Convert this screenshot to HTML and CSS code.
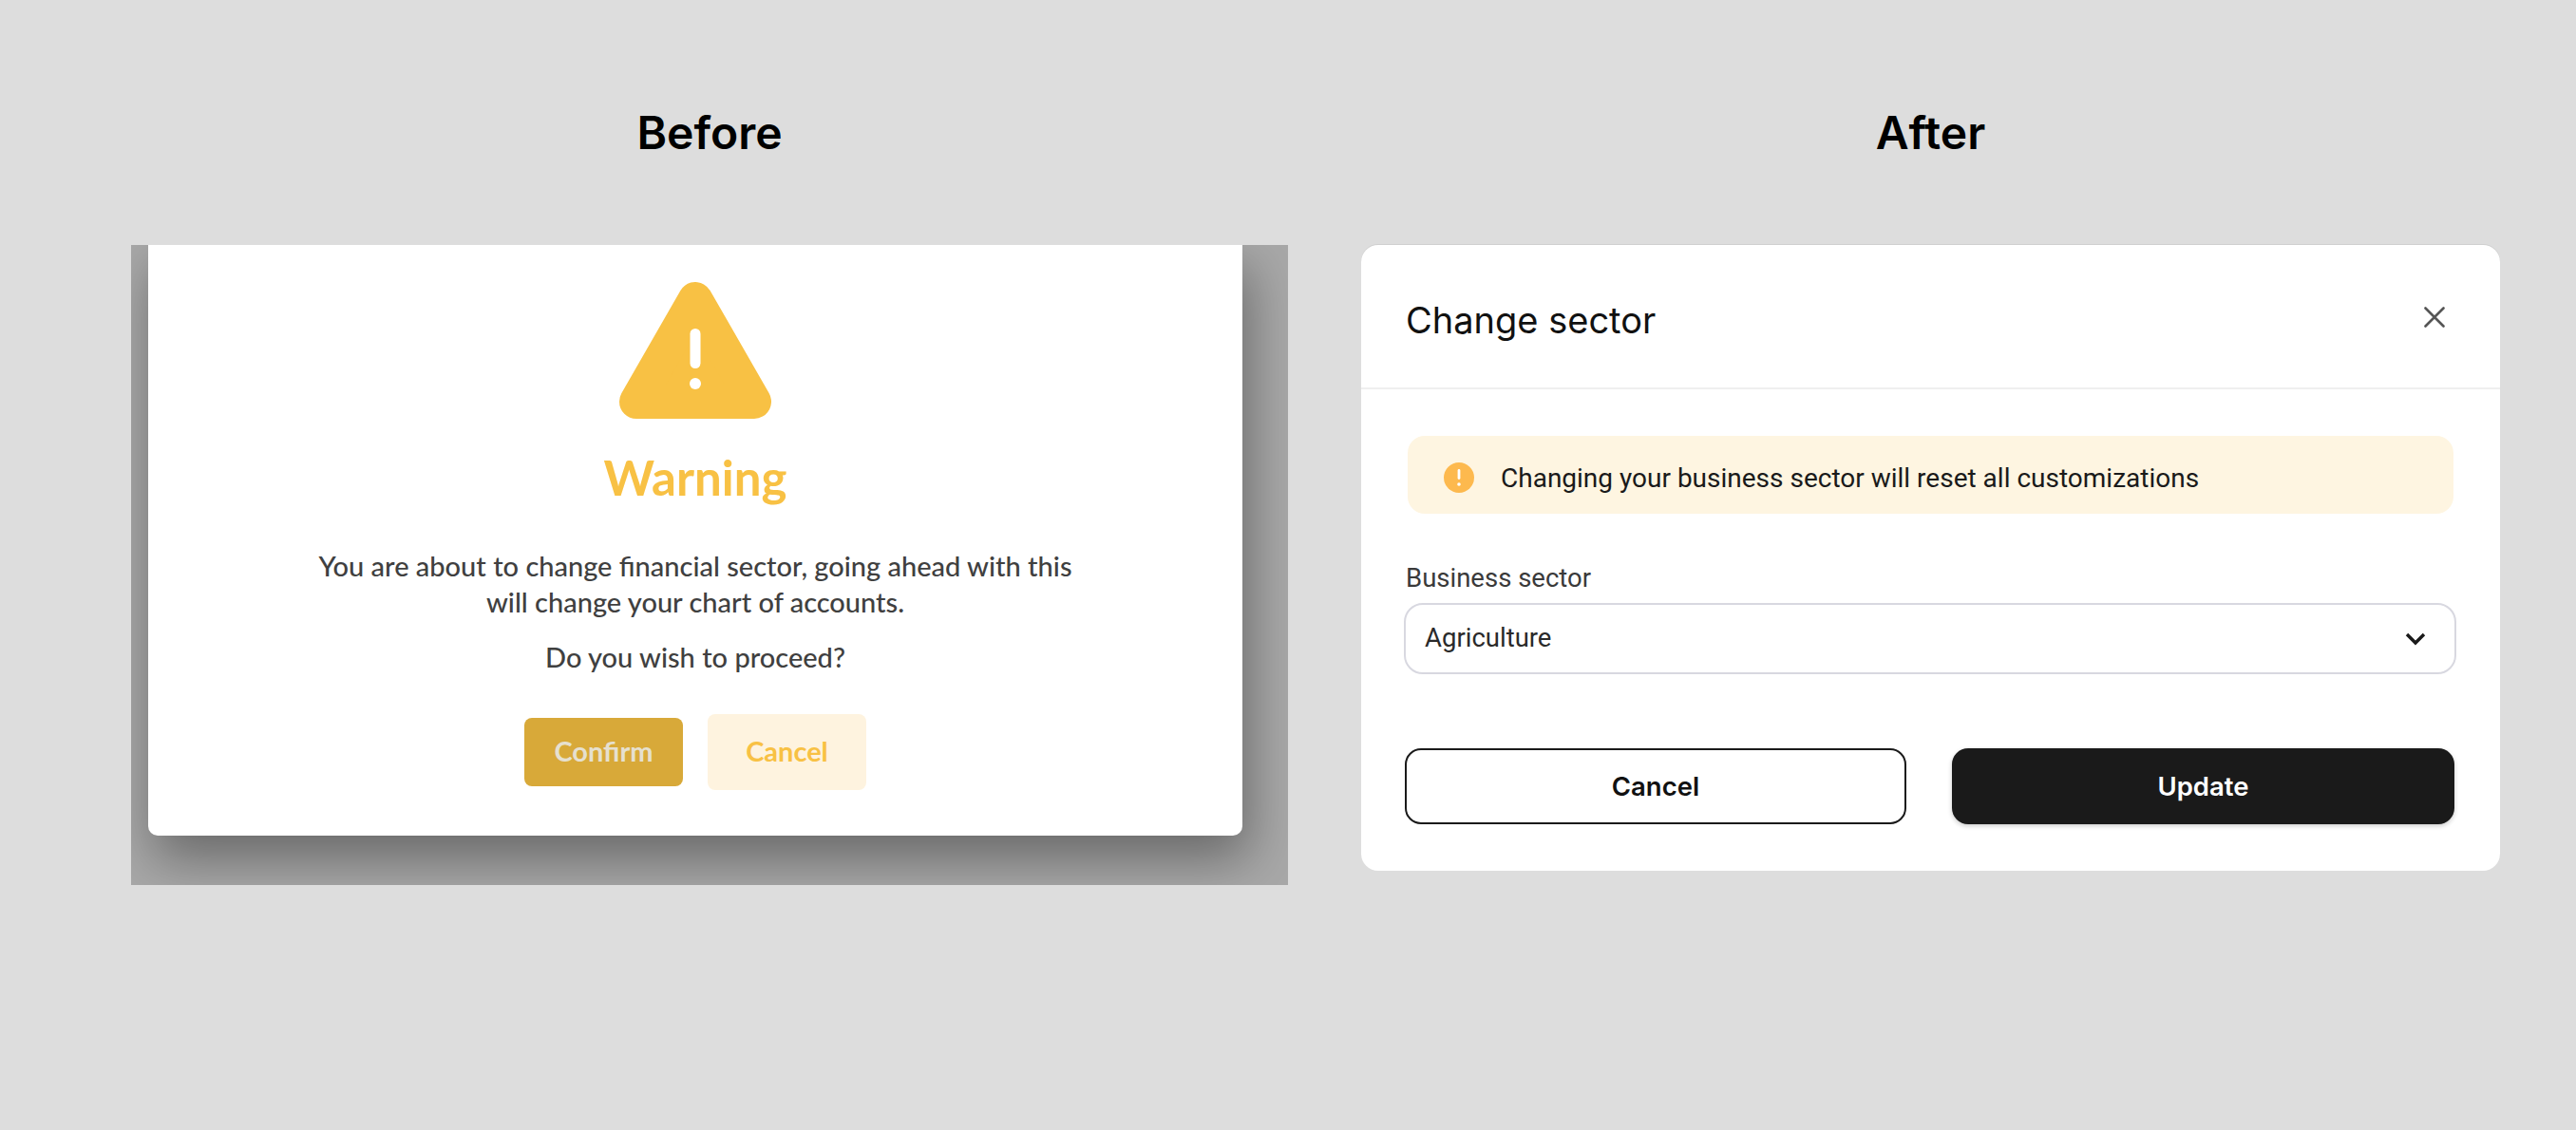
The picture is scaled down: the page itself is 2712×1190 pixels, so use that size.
FILE: index.html
```html
<!DOCTYPE html>
<html lang="en">
<head>
  <meta charset="UTF-8">
  <title>Before and after</title>
  <link rel="stylesheet" href="styles.css">
</head>
<body>
  <div class="page">
    <h1 class="side-title">Before</h1>
    <h1 class="side-title">After</h1>

    <div class="backdrop">
      <div class="warn-modal">
        <svg class="warn-icon" viewBox="0 0 160 144" width="160" height="144">
          <path d="M80 18 L142 126 L18 126 Z" fill="#f8c144" stroke="#f8c144" stroke-width="36" stroke-linejoin="round"/>
          <rect x="74.5" y="49" width="11" height="42" rx="5.5" fill="#fff"/>
          <circle cx="80" cy="107" r="6" fill="#fff"/>
        </svg>
        <h2 class="warn-title">Warning</h2>
        <p class="warn-text">You are about to change financial sector, going ahead with this<br>will change your chart of accounts.</p>
        <p class="warn-ask">Do you wish to proceed?</p>
        <div class="warn-actions">
          <button class="warn-confirm">Confirm</button>
          <button class="warn-cancel">Cancel</button>
        </div>
      </div>
    </div>

    <div class="card">
      <div class="card-head">
        <h2 class="card-title">Change sector</h2>
        <svg class="close-icon" viewBox="0 0 22 22" width="22" height="22">
          <path d="M1.5 1.5 L20.5 20.5 M20.5 1.5 L1.5 20.5" stroke="#555" stroke-width="2.6" stroke-linecap="round" fill="none"/>
        </svg>
      </div>
      <div class="card-body">
        <div class="alert">
          <svg class="alert-icon" viewBox="0 0 32 32" width="32" height="32">
            <circle cx="16" cy="16" r="16" fill="#fdb94e"/>
            <rect x="14.6" y="7" width="2.8" height="11" rx="1.4" fill="#fff"/>
            <circle cx="16" cy="23" r="1.8" fill="#fff"/>
          </svg>
          <span>Changing your business sector will reset all customizations</span>
        </div>
        <label class="field-label">Business sector</label>
        <div class="select">
          <span>Agriculture</span>
          <svg class="chevron" viewBox="0 0 22 14" width="22" height="14">
            <path d="M2 2 L11 11 L20 2" stroke="#1a1a1a" stroke-width="3.4" fill="none"/>
          </svg>
        </div>
        <div class="card-actions">
          <button class="btn-outline">Cancel</button>
          <button class="btn-dark">Update</button>
        </div>
      </div>
    </div>
  </div>
</body>
</html>
```

FILE: styles.css
```css
html, body {
  margin: 0;
  padding: 0;
  height: 100%;
}
body {
  background-color: #dddddd;
  font-family: "Inter", sans-serif;
  overflow: hidden;
}
.page {
  display: grid;
  grid-template-columns: 1218px 1199px;
  grid-template-rows: 258px auto;
  column-gap: 77px;
  padding-left: 138px;
  align-items: start;
}
.side-title {
  margin: 112px 0 0;
  font-size: 48px;
  line-height: 56px;
  font-weight: 600;
  color: #000;
  text-align: center;
}

/* before */
.backdrop {
  background-color: #a8a8a8;
  height: 674px;
  padding: 0 48px 0 18px;
  box-sizing: border-box;
  overflow: hidden;
}
.warn-modal {
  height: 622px;
  box-sizing: border-box;
  padding-top: 39px;
  background-color: #fff;
  border-radius: 0 0 10px 10px;
  box-shadow: 6px 24px 54px rgba(0, 0, 0, 0.38);
  display: flex;
  flex-direction: column;
  align-items: center;
  font-family: "Lato", sans-serif;
}
.warn-icon {
  display: block;
}
.warn-title {
  margin: 34px 0 0;
  font-size: 51px;
  line-height: 56px;
  font-weight: 700;
  color: #f8c144;
}
.warn-text {
  margin: 46px 0 0;
  font-size: 29px;
  line-height: 38px;
  font-weight: 500;
  color: #404040;
  text-align: center;
}
.warn-ask {
  margin: 20px 0 0;
  font-size: 29px;
  line-height: 38px;
  font-weight: 500;
  color: #404040;
}
.warn-actions {
  margin-top: 41px;
  display: flex;
  align-items: center;
  gap: 26px;
}
.warn-actions button {
  width: 167px;
  border: none;
  border-radius: 8px;
  padding: 0 0 3px;
  font-family: "Lato", sans-serif;
  font-size: 29px;
  font-weight: 700;
}
.warn-confirm {
  height: 72px;
  background-color: #d8a939;
  color: #e6e0cf;
}
.warn-cancel {
  height: 80px;
  background-color: #fef3df;
  color: #f8c144;
}

/* after */
.card {
  height: 659px;
  background-color: #fff;
  border-radius: 18px;
  box-shadow: 0 -1px 0 rgba(0, 0, 0, 0.06);
}
.card-head {
  height: 148px;
  border-bottom: 2px solid #efefef;
  padding: 2px 58px 0 47px;
  display: flex;
  justify-content: space-between;
  align-items: center;
}
.card-title {
  margin: 6px 0 0;
  font-size: 38px;
  font-weight: 400;
  color: #111;
}
.card-body {
  padding: 49px 46px 0;
}
.alert {
  margin: 0 3px;
  height: 82px;
  padding-left: 38px;
  background-color: #fef5e1;
  border-radius: 18px;
  display: flex;
  align-items: center;
  gap: 28px;
  font-family: "Roboto", sans-serif;
  font-size: 28px;
  color: #1a1a1a;
}
.alert-icon {
  flex: none;
  margin-top: 6px;
}
.alert span {
  margin-top: 6px;
}
.field-label {
  display: block;
  margin: 50px 0 8px 1px;
  font-family: "Roboto", sans-serif;
  font-size: 27.5px;
  line-height: 36px;
  color: #3a3a3a;
}
.select {
  margin-left: -1px;
  height: 75px;
  box-sizing: border-box;
  border: 2px solid #d8d8e0;
  border-radius: 20px;
  padding: 0 30px 2px 20px;
  display: flex;
  justify-content: space-between;
  align-items: center;
  font-family: "Roboto", sans-serif;
  font-size: 27.5px;
  color: #2a2a2a;
}
.select .chevron {
  margin-top: 2px;
}
.card-actions {
  margin-top: 78px;
  display: grid;
  grid-template-columns: 528px 529px;
  column-gap: 48px;
}
.card-actions button {
  height: 80px;
  border-radius: 17px;
  font-family: "Inter", sans-serif;
  font-size: 27.5px;
  font-weight: 600;
}
.btn-outline {
  background-color: #fff;
  border: 2px solid #1a1a1a;
  color: #111;
}
.btn-dark {
  background-color: #1a1a1a;
  border: none;
  color: #fff;
  box-shadow: 0 2px 5px rgba(0, 0, 0, 0.2);
}
```
